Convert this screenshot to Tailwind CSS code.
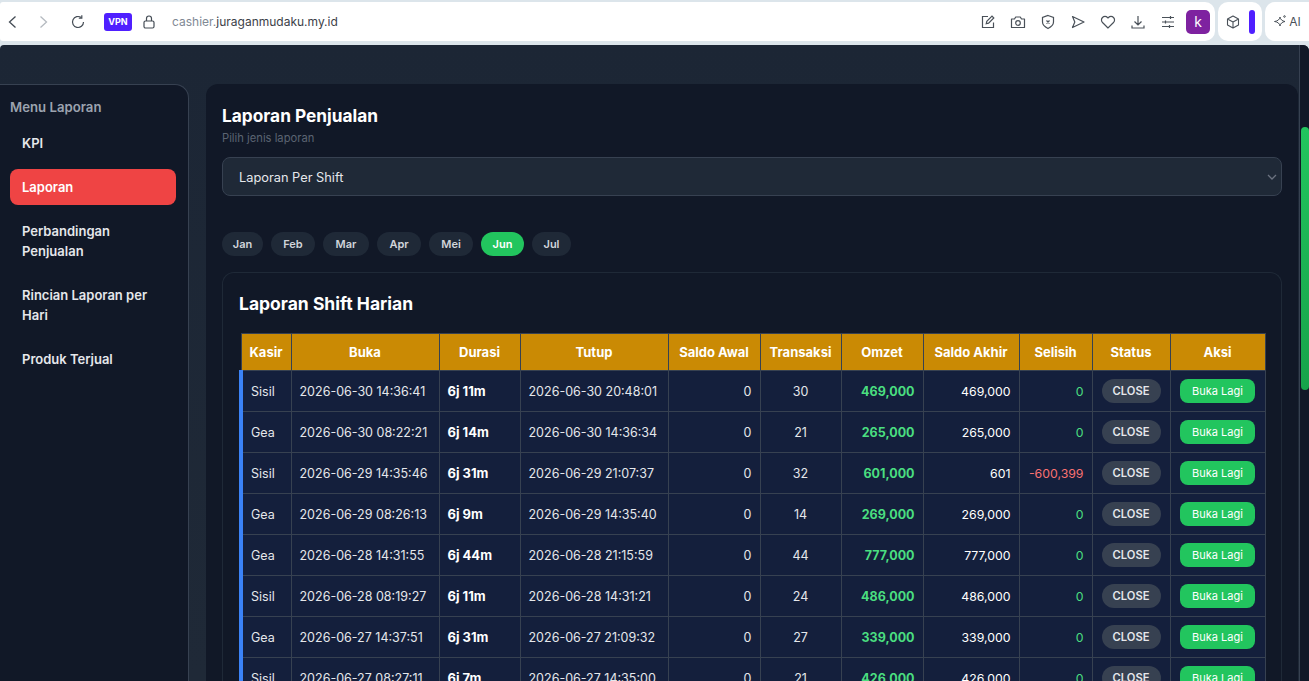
<!DOCTYPE html>
<html lang="en">
<head>
  <meta charset="UTF-8">
  <meta name="viewport" content="width=device-width, initial-scale=1.0">
  <title>Laporan Penjualan</title>
  <script src="https://cdn.jsdelivr.net/npm/@tailwindcss/browser@4"></script>
</head>
<body class="h-[681px] w-[1309px] overflow-hidden bg-[#dce5eb] font-['Inter','Noto_Sans',sans-serif] text-white">
  <!-- Browser toolbar -->
  <div class="flex h-[45px] items-start gap-[3px] pt-[2px]">
    <div class="flex h-[39px] flex-1 items-center rounded-l-[3px] rounded-r-[10px] bg-white pl-[5px] pr-[5px]">
      <svg class="h-6 w-3.5 text-[#444c55]" viewBox="0 0 14 24" fill="none" stroke="currentColor" stroke-width="1.3"><path d="M10.5 6.5 4.5 12l6 5.500"/></svg>
      <svg class="ml-[18px] h-6 w-3.5 text-[#b5bac0]" viewBox="0 0 14 24" fill="none" stroke="currentColor" stroke-width="1.3"><path d="M3.5 6.5 9.5 12l-6 5.500"/></svg>
      <svg class="ml-[19px] h-4 w-4 text-[#444c55]" viewBox="0 0 16 16" fill="none" stroke="currentColor" stroke-width="1.2"><path d="M13.5 8A5.500 5.500 0 1 1 11.300 3.600"/><path d="M11.800 1.200v3h-3"/></svg>
      <div class="ml-[18px] flex h-[18px] w-7 items-center justify-center rounded-[3px] bg-[#4f1fff] text-[9px] font-bold">VPN</div>
      <svg class="ml-[10px] h-4 w-3.5 text-[#444c55]" viewBox="0 0 14 16" fill="none" stroke="currentColor" stroke-width="1.2"><rect x="2" y="7" width="10" height="7" rx="1.5"/><path d="M4.500 7V4.500a2.500 2.500 0 0 1 5 0V7"/></svg>
      <div class="ml-[16px] text-[12px] text-[#3c4148]"><span class="text-[#7f8994]">cashier.</span>juraganmudaku.my.id</div>
      <div class="ml-auto flex items-center gap-[14px] text-[#4a5159]">
        <svg class="h-4 w-4" viewBox="0 0 16 16" fill="none" stroke="currentColor" stroke-width="1.2"><path d="M8 2.500H2.500v11h11V8.500"/><path d="m6.200 9.800.6-2.400L12 2.200l1.800 1.800-5.200 5.200z"/></svg>
        <svg class="h-4 w-4" viewBox="0 0 16 16" fill="none" stroke="currentColor" stroke-width="1.2"><path d="M1.500 5h3l1.200-2h4.600l1.200 2h3v8.500h-13z" stroke-linejoin="round"/><circle cx="8" cy="9" r="2.300"/></svg>
        <svg class="h-4 w-4" viewBox="0 0 16 16" fill="none" stroke="currentColor" stroke-width="1.2"><path d="M8 1.500 13.500 3.500v4.500c0 3-2.500 5-5.500 6.500C5 13 2.500 11 2.500 8V3.500z"/><path d="m6.500 6.500 3 3m0-3-3 3"/></svg>
        <svg class="h-4 w-4" viewBox="0 0 16 16" fill="none" stroke="currentColor" stroke-width="1.2"><path d="M2.500 2.500 14 8 2.500 13.500 4.800 8z" stroke-linejoin="round"/></svg>
        <svg class="h-4 w-4" viewBox="0 0 16 16" fill="none" stroke="currentColor" stroke-width="1.2"><path d="M8 14 2.500 8.500a3.500 3.500 0 0 1 0-5 3.500 3.500 0 0 1 5 0l.5.500.5-.5a3.500 3.500 0 0 1 5 0 3.500 3.500 0 0 1 0 5z"/></svg>
        <svg class="h-4 w-4" viewBox="0 0 16 16" fill="none" stroke="currentColor" stroke-width="1.2"><path d="M8 2v8.500M4.500 7.500 8 11l3.500-3.500M2 11.500V14h12v-2.500"/></svg>
        <svg class="h-4 w-4" viewBox="0 0 16 16" fill="none" stroke="currentColor" stroke-width="1.2"><path d="M2 3.500h12M2 8h12M2 12.500h12M10.500 2v3M5.500 6.500v3M9.500 11v3"/></svg>
      </div>
      <div class="ml-[10px] flex h-6 w-6 items-center justify-center rounded-[5px] bg-[#7e22a0] text-[14px]">k</div>
    </div>
    <div class="flex h-[39px] w-[44px] items-center justify-center gap-[9px] rounded-[10px] bg-white">
      <svg class="h-[14px] w-[14px] text-[#4a5159]" viewBox="0 0 14 14" fill="none" stroke="currentColor" stroke-width="1.1"><path d="m7 1 5.500 3v6L7 13l-5.500-3V4zM1.500 4 7 7l5.500-3M7 7v6" stroke-linejoin="round"/></svg>
      <div class="h-[24px] w-[6px] rounded-[3px] bg-[#4f1fff]"></div>
    </div>
    <div class="flex h-[39px] w-[44px] items-center justify-center gap-[1px] rounded-l-[10px] bg-white text-[12px] text-[#4a5159]">
      <svg class="h-[15px] w-[15px]" viewBox="0 0 15 15" fill="none" stroke="currentColor" stroke-width="1"><path d="M7 3c.5 2.500 2 4 5 4.500-3 .5-4.500 2-5 4.500-.5-2.500-2-4-5.500-4.500C5 7 6.500 5.500 7 3z" stroke-linejoin="round"/><circle cx="11.500" cy="2.500" r=".8"/></svg>
      <span>AI</span>
    </div>
  </div>

  <!-- Page -->
  <div class="flex h-[636px] overflow-hidden rounded-tl-[4px] rounded-tr-[6px] bg-gradient-to-b from-[#1c2635] to-[#1f2937]">
    <div class="flex w-[1299px] items-start pt-[39px]">
      <!-- Sidebar -->
      <aside class="h-[600px] w-[189px] shrink-0 rounded-tr-[14px] border-t border-r border-[#374151] bg-[#111827] pl-[10px] pr-3 pt-[13px]">
        <div class="mb-[9px] text-[13.2px] leading-[18px] font-semibold text-[#9ca3af]">Menu Laporan</div>
        <nav class="flex flex-col gap-[8px] text-[13px] leading-[20px] font-semibold text-[#e5e7eb]">
          <a class="rounded-lg px-3 py-2">KPI</a>
          <a class="rounded-lg bg-[#ef4444] px-3 py-2 text-white">Laporan</a>
          <a class="rounded-lg px-3 py-2">Perbandingan Penjualan</a>
          <a class="rounded-lg px-3 py-2">Rincian Laporan per Hari</a>
          <a class="rounded-lg px-3 py-2">Produk Terjual</a>
        </nav>
      </aside>

      <!-- Main -->
      <main class="ml-[17px] h-[600px] w-[1092px] shrink-0 rounded-t-[12px] bg-[#111827] px-4 pt-[21px]">
        <h1 class="text-[17.3px] leading-[22px] font-bold">Laporan Penjualan</h1>
        <p class="mt-[3px] text-[11.2px] leading-[16px] text-[#5b6472]">Pilih jenis laporan</p>
        <div class="mt-[11px] flex h-[39px] items-center justify-between rounded-lg border border-[#374151] bg-[#1f2937] pl-4 pr-[4px] text-[12.8px] text-[#e5e7eb]">
          <span class="pt-[2px]">Laporan Per Shift</span>
          <svg class="h-2 w-2.5 text-[#6b7280]" viewBox="0 0 10 8" fill="none" stroke="currentColor" stroke-width="1.3"><path d="m1 2 4 4 4-4"/></svg>
        </div>

        <div class="mt-[36px] flex gap-2 text-center text-[11px] leading-[24px] font-semibold text-[#d1d5db]">
          <span class="w-[41px] rounded-full bg-[#1f2937]">Jan</span>
          <span class="w-[44px] rounded-full bg-[#1f2937]">Feb</span>
          <span class="w-[46px] rounded-full bg-[#1f2937]">Mar</span>
          <span class="w-[44px] rounded-full bg-[#1f2937]">Apr</span>
          <span class="w-[44px] rounded-full bg-[#1f2937]">Mei</span>
          <span class="w-[43px] rounded-full bg-[#22c55e] text-white">Jun</span>
          <span class="w-[39px] rounded-full bg-[#1f2937]">Jul</span>
        </div>

        <section class="mt-4 h-[500px] rounded-t-[12px] border border-b-0 border-[#1f2937] pl-4 pr-4 pt-[19px]">
          <h2 class="mb-[17px] text-[17.5px] leading-[24px] font-bold">Laporan Shift Harian</h2>
          <table class="w-[1025px] table-fixed border-collapse text-[12.5px]">
            <colgroup>
              <col class="w-[50px]"><col class="w-[148px]"><col class="w-[81px]"><col class="w-[148px]"><col class="w-[92px]"><col class="w-[81px]"><col class="w-[82px]"><col class="w-[96px]"><col class="w-[73px]"><col class="w-[78px]"><col class="w-[95px]">
            </colgroup>
            <thead class="bg-[#ca8a04] text-[13px] font-bold">
              <tr class="h-[37px]">
                <th class="border border-[#374151] pt-[2px]">Kasir</th>
                <th class="border border-[#374151] pt-[2px]">Buka</th>
                <th class="border border-[#374151] pt-[2px]">Durasi</th>
                <th class="border border-[#374151] pt-[2px]">Tutup</th>
                <th class="border border-[#374151] pt-[2px]">Saldo Awal</th>
                <th class="border border-[#374151] pt-[2px]">Transaksi</th>
                <th class="border border-[#374151] pt-[2px]">Omzet</th>
                <th class="border border-[#374151] pt-[2px]">Saldo Akhir</th>
                <th class="border border-[#374151] pt-[2px]">Selisih</th>
                <th class="border border-[#374151] pt-[2px]">Status</th>
                <th class="border border-[#374151] pt-[2px]">Aksi</th>
              </tr>
            </thead>
            <tbody id="rows" class="bg-[#141f3c] text-[#e5e7eb]"></tbody>
          </table>
        </section>
      </main>
    </div>
    <!-- Scrollbar -->
    <div class="w-[10px] border-l border-[#374151] bg-[#111827] pl-[1px] pt-[82px]">
      <div class="h-[263px] w-[8px] rounded-full bg-gradient-to-b from-[#22c55e] to-[#16a34a]"></div>
    </div>
  </div>

  <script>
    // kasir, buka, durasi, tutup, transaksi, omzet, saldo akhir, selisih
    const shifts = [
      ["Sisil", "2026-06-30 14:36:41", "6j 11m", "2026-06-30 20:48:01", 30, "469,000", "469,000", "0"],
      ["Gea", "2026-06-30 08:22:21", "6j 14m", "2026-06-30 14:36:34", 21, "265,000", "265,000", "0"],
      ["Sisil", "2026-06-29 14:35:46", "6j 31m", "2026-06-29 21:07:37", 32, "601,000", "601", "-600,399"],
      ["Gea", "2026-06-29 08:26:13", "6j 9m", "2026-06-29 14:35:40", 14, "269,000", "269,000", "0"],
      ["Gea", "2026-06-28 14:31:55", "6j 44m", "2026-06-28 21:15:59", 44, "777,000", "777,000", "0"],
      ["Sisil", "2026-06-28 08:19:27", "6j 11m", "2026-06-28 14:31:21", 24, "486,000", "486,000", "0"],
      ["Gea", "2026-06-27 14:37:51", "6j 31m", "2026-06-27 21:09:32", 27, "339,000", "339,000", "0"],
      ["Sisil", "2026-06-27 08:27:11", "6j 7m", "2026-06-27 14:35:00", 21, "426,000", "426,000", "0"],
    ];

    document.getElementById("rows").innerHTML = shifts.map((s) => `
      <tr class="h-[41px]">
        <td class="border border-[#374151] border-l-[4px] border-l-[#3b82f6] pl-2 pt-[2px]">${s[0]}</td>
        <td class="border border-[#374151] pl-2 pt-[2px]">${s[1]}</td>
        <td class="border border-[#374151] pl-2 pt-[2px] text-[13px] font-bold text-white">${s[2]}</td>
        <td class="border border-[#374151] pl-2 pt-[2px]">${s[3]}</td>
        <td class="border border-[#374151] pr-2 pt-[2px] text-right">0</td>
        <td class="border border-[#374151] pt-[2px] text-center">${s[4]}</td>
        <td class="border border-[#374151] pr-2 pt-[2px] text-right font-bold text-[#4ade80]">${s[5]}</td>
        <td class="border border-[#374151] pr-2 pt-[2px] text-right text-[12.3px] text-white">${s[6]}</td>
        <td class="border border-[#374151] pr-2 pt-[2px] text-right text-[12.3px] ${s[7] === "0" ? "text-[#4ade80]" : "text-[#f87171]"}">${s[7]}</td>
        <td class="border border-[#374151] text-center"><span class="inline-block h-6 w-[59px] rounded-full bg-[#374151] text-[11.2px] leading-[25px] font-semibold">CLOSE</span></td>
        <td class="border border-[#374151] text-center"><span class="inline-block h-6 w-[75px] rounded-lg bg-[#22c55e] text-[11px] leading-[25px] text-white">Buka Lagi</span></td>
      </tr>`).join("");
  </script>
</body>
</html>
